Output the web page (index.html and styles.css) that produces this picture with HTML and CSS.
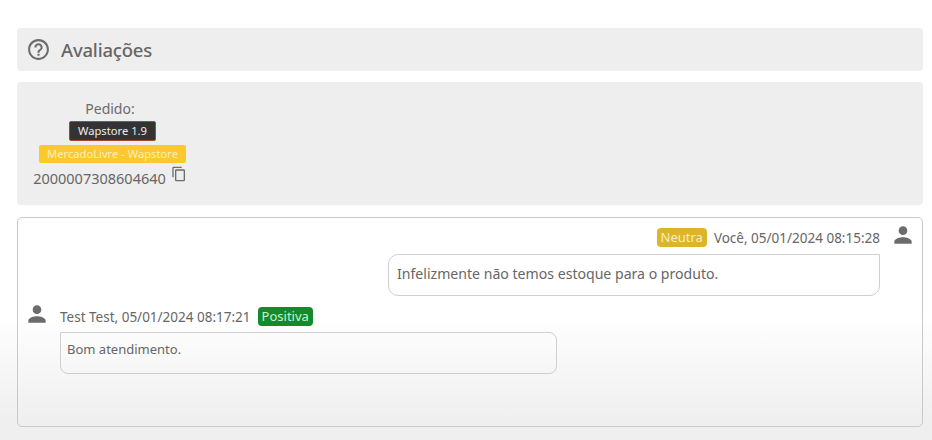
FILE: index.html
```html
<!DOCTYPE html>
<html lang="pt">
<head>
<meta charset="utf-8">
<title>Avaliações</title>
<link rel="stylesheet" href="styles.css">
</head>
<body>
<main class="page">
  <header class="title-bar">
    <svg class="help-icon" viewBox="0 0 24 24" aria-hidden="true"><path d="M11 18h2v-2h-2v2zm1-16C6.48 2 2 6.48 2 12s4.48 10 10 10 10-4.48 10-10S17.52 2 12 2zm0 18c-4.41 0-8-3.59-8-8s3.59-8 8-8 8 3.59 8 8-3.59 8-8 8zm0-14c-2.21 0-4 1.79-4 4h2c0-1.1.9-2 2-2s2 .9 2 2c0 2-3 1.75-3 5h2c0-2.25 3-2.5 3-5 0-2.21-1.79-4-4-4z"/></svg>
    <h1 class="title">Avaliações</h1>
  </header>

  <section class="order-panel">
    <div class="order">
      <div class="order-label">Pedido:</div>
      <span class="tag tag-dark">Wapstore 1.9</span>
      <span class="tag tag-yellow">MercadoLivre - Wapstore</span>
      <div class="order-number">2000007308604640
        <svg class="copy-icon" viewBox="0 0 24 24" aria-hidden="true"><path d="M16 1H4c-1.1 0-2 .9-2 2v14h2V3h12V1zm3 4H8c-1.1 0-2 .9-2 2v14c0 1.1.9 2 2 2h11c1.1 0 2-.9 2-2V7c0-1.1-.9-2-2-2zm0 16H8V7h11v14z"/></svg>
      </div>
    </div>
  </section>

  <section class="chat">
    <article class="msg msg-right">
      <div class="msg-body">
        <div class="msg-meta">
          <span class="badge badge-neutral">Neutra</span>
          <span>Você, 05/01/2024 08:15:28</span>
        </div>
        <div class="bubble bubble-right">Infelizmente não temos estoque para o produto.</div>
      </div>
      <svg class="person" viewBox="0 0 24 24" aria-hidden="true"><path d="M12 12c2.21 0 4-1.79 4-4s-1.79-4-4-4-4 1.79-4 4 1.79 4 4 4zm0 2c-2.67 0-8 1.34-8 4v2h16v-2c0-2.66-5.33-4-8-4z"/></svg>
    </article>
    <article class="msg msg-left">
      <svg class="person" viewBox="0 0 24 24" aria-hidden="true"><path d="M12 12c2.21 0 4-1.79 4-4s-1.79-4-4-4-4 1.79-4 4 1.79 4 4 4zm0 2c-2.67 0-8 1.34-8 4v2h16v-2c0-2.66-5.33-4-8-4z"/></svg>
      <div class="msg-body">
        <div class="msg-meta">
          <span>Test Test, 05/01/2024 08:17:21</span>
          <span class="badge badge-positive">Positiva</span>
        </div>
        <div class="bubble bubble-left">Bom atendimento.</div>
      </div>
    </article>
  </section>
</main>
</body>
</html>
```
FILE: styles.css
```css
* { box-sizing: border-box; }
html, body { height: 100%; }
body {
  margin: 0;
  font-family: "Noto Sans", "Open Sans", sans-serif;
  color: #666;
  background: linear-gradient(to bottom, #fff 0, #fff 315px, #efefef 420px, #efefef 100%);
}
.page { padding: 28px 9px 0 17px; }
.title-bar {
  height: 43px;
  display: flex;
  align-items: center;
  gap: 10px;
  padding-left: 9px;
  background: #eeeeee;
  border-radius: 4px;
}
.help-icon { width: 25px; height: 25px; fill: #6c6c6c; }
.title { margin: 0; font-size: 18.5px; font-weight: 500; color: #666; letter-spacing: -0.2px; }
.order-panel {
  height: 123px;
  margin-top: 11px;
  padding: 16px 0 0 16px;
  background: #eeeeee;
  border-radius: 4px;
}
.order {
  width: 154px;
  display: flex;
  flex-direction: column;
  align-items: center;
}
.order-label { font-size: 14px; line-height: 22px; color: #6c6c6c; }
.tag {
  display: block;
  margin-left: 5px;
  font-size: 11.2px;
  line-height: 14px;
  border-radius: 2px;
  white-space: nowrap;
}
.tag-dark {
  margin-top: 1px;
  padding: 2px 8px;
  background: #333;
  color: #eee;
  border: 1px solid #a5492f;
}
.tag-yellow {
  margin-top: 4px;
  padding: 2px 8px;
  background: #fbc92e;
  color: #fdeeb5;
}
.order-number {
  display: flex;
  align-items: flex-start;
  margin-top: 5px;
  font-size: 14.5px;
  line-height: 20px;
  color: #666;
}
.copy-icon { width: 16px; height: 16px; margin: -2px 0 0 5px; fill: #6c6c6c; }
.chat {
  height: 210px;
  margin-top: 12px;
  border: 1px solid #c9c9c9;
  border-radius: 5px;
  padding: 4px 6px 0 6px;
}
.msg { display: flex; gap: 10px; }
.msg-right { justify-content: flex-end; height: 79px; }
.msg-body { display: flex; flex-direction: column; }
.msg-right .msg-body { align-items: flex-end; }
.msg-meta {
  display: flex;
  align-items: center;
  gap: 7px;
  height: 31px;
  font-size: 13.5px;
  color: #666;
}
.badge {
  font-size: 13px;
  line-height: 19px;
  padding: 0 4px;
  border-radius: 4px;
}
.badge-neutral { background: #dcb528; color: #f9eeb9; }
.badge-positive { background: #138a2c; color: #c9efd0; }
.bubble {
  height: 42px;
  border: 1px solid #cfcfcf;
  color: #666;
}
.bubble-right {
  width: 492px;
  margin-top: 1px;
  padding: 0 8px;
  font-size: 14.1px;
  line-height: 38px;
  border-radius: 10px 0 10px 10px;
}
.bubble-left {
  width: 497px;
  padding: 0 6px;
  font-size: 13px;
  line-height: 32px;
  border-radius: 0 8px 8px 8px;
}
.person { width: 26px; height: 26px; flex: none; fill: #6c6c6c; }
.msg-left { align-items: flex-start; }
```
